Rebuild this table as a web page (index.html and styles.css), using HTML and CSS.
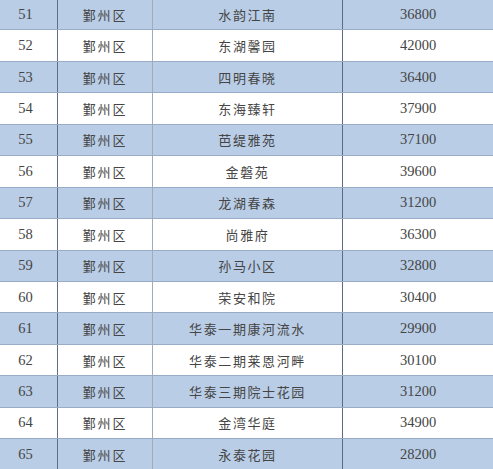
FILE: index.html
```html
<!DOCTYPE html>
<html lang="zh">
<head>
<meta charset="utf-8">
<link rel="stylesheet" href="styles.css">
</head>
<body>
<div class="table">
  <div class="row blue"><div class="c no">51</div><div class="c dist">鄞州区</div><div class="c name">水韵江南</div><div class="c price">36800</div></div>
  <div class="row"><div class="c no">52</div><div class="c dist">鄞州区</div><div class="c name">东湖馨园</div><div class="c price">42000</div></div>
  <div class="row blue"><div class="c no">53</div><div class="c dist">鄞州区</div><div class="c name">四明春晓</div><div class="c price">36400</div></div>
  <div class="row"><div class="c no">54</div><div class="c dist">鄞州区</div><div class="c name">东海臻轩</div><div class="c price">37900</div></div>
  <div class="row blue"><div class="c no">55</div><div class="c dist">鄞州区</div><div class="c name">芭缇雅苑</div><div class="c price">37100</div></div>
  <div class="row"><div class="c no">56</div><div class="c dist">鄞州区</div><div class="c name">金磐苑</div><div class="c price">39600</div></div>
  <div class="row blue"><div class="c no">57</div><div class="c dist">鄞州区</div><div class="c name">龙湖春森</div><div class="c price">31200</div></div>
  <div class="row"><div class="c no">58</div><div class="c dist">鄞州区</div><div class="c name">尚雅府</div><div class="c price">36300</div></div>
  <div class="row blue"><div class="c no">59</div><div class="c dist">鄞州区</div><div class="c name">孙马小区</div><div class="c price">32800</div></div>
  <div class="row"><div class="c no">60</div><div class="c dist">鄞州区</div><div class="c name">荣安和院</div><div class="c price">30400</div></div>
  <div class="row blue"><div class="c no">61</div><div class="c dist">鄞州区</div><div class="c name">华泰一期康河流水</div><div class="c price">29900</div></div>
  <div class="row"><div class="c no">62</div><div class="c dist">鄞州区</div><div class="c name">华泰二期莱恩河畔</div><div class="c price">30100</div></div>
  <div class="row blue"><div class="c no">63</div><div class="c dist">鄞州区</div><div class="c name">华泰三期院士花园</div><div class="c price">31200</div></div>
  <div class="row"><div class="c no">64</div><div class="c dist">鄞州区</div><div class="c name">金湾华庭</div><div class="c price">34900</div></div>
  <div class="row blue"><div class="c no">65</div><div class="c dist">鄞州区</div><div class="c name">永泰花园</div><div class="c price">28200</div></div>
</div>
</body>
</html>
```
FILE: styles.css
```css
html, body {
  margin: 0;
  padding: 0;
  background: #ffffff;
  overflow: hidden;
}
.table {
  width: 493px;
  margin-top: -1px;
  display: flex;
  flex-direction: column;
}
.row {
  display: grid;
  grid-template-columns: 58px 95px 190px 150px;
  height: 31.45px;
  box-sizing: border-box;
  border-bottom: 1px solid #9aabc6;
  background: #ffffff;
}
.row.blue {
  background: #b9cde6;
}
.c {
  display: flex;
  align-items: center;
  justify-content: center;
  color: #454545;
  box-sizing: border-box;
}
.no {
  border-right: 1px solid #5e6e8c;
  font-family: "Liberation Serif", serif;
  font-size: 14.5px;
  padding-right: 6px;
}
.dist {
  border-right: 1px solid #a3abb9;
  font-family: "Noto Sans CJK SC", sans-serif;
  font-size: 13px;
  letter-spacing: 1.8px;
}
.name {
  border-right: 1px solid #5a6b8a;
  font-family: "Noto Sans CJK SC", sans-serif;
  font-size: 13px;
  letter-spacing: 1.6px;
}
.price {
  font-family: "Liberation Serif", serif;
  font-size: 14.5px;
}
```
